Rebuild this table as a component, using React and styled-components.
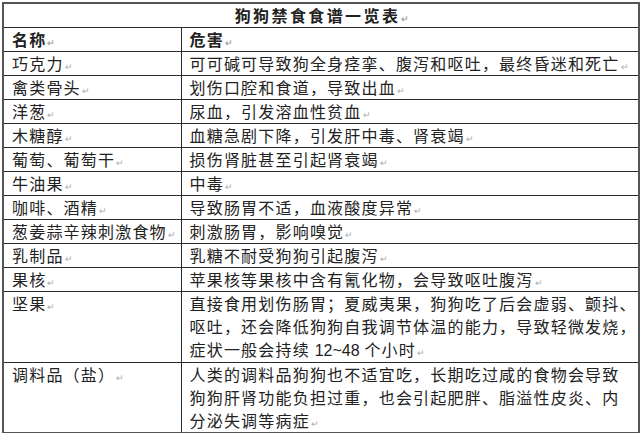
import React from "react";
import styled, { createGlobalStyle } from "styled-components";

const Global = createGlobalStyle`
  html, body { margin: 0; padding: 0; background: #fff; }
  body { font-family: "Noto Sans CJK SC", "Liberation Sans", sans-serif; }
`;

const Page = styled.div`
  padding: 2px 2px 0 2px;
  width: 640px;
  box-sizing: border-box;
`;

const Table = styled.table`
  border-collapse: collapse;
  width: 636px;
  table-layout: fixed;
  border: 2px solid #555;
  color: #222;
  font-size: 16px;
  letter-spacing: 1.2px;
`;

const Col = styled.col`
  width: ${(p) => p.$w};
`;

const Row = styled.tr``;

const Cell = styled.td`
  border: 1px solid #2a2a2a;
  padding: 0 0 0 8px;
  height: 23px;
  line-height: 23px;
  vertical-align: top;
  white-space: nowrap;
  overflow: hidden;
  font-weight: ${(p) => (p.$bold ? 700 : 400)};
`;

const TitleCell = styled(Cell)`
  text-align: center;
  font-weight: 700;
  letter-spacing: 2.4px;
  padding-left: 2px;
`;

const Mark = styled.span`
  font-size: 9px;
  line-height: 0;
  color: #aaa;
  letter-spacing: 0;
  margin-left: 1px;
`;

const Num = styled.span`
  font-family: "Liberation Sans", sans-serif;
  letter-spacing: 0;
`;

const rows = [
  ["巧克力", ["可可碱可导致狗全身痉挛、腹泻和呕吐，最终昏迷和死亡"]],
  ["禽类骨头", ["划伤口腔和食道，导致出血"]],
  ["洋葱", ["尿血，引发溶血性贫血"]],
  ["木糖醇", ["血糖急剧下降，引发肝中毒、肾衰竭"]],
  ["葡萄、葡萄干", ["损伤肾脏甚至引起肾衰竭"]],
  ["牛油果", ["中毒"]],
  ["咖啡、酒精", ["导致肠胃不适，血液酸度异常"]],
  ["葱姜蒜辛辣刺激食物", ["刺激肠胃，影响嗅觉"]],
  ["乳制品", ["乳糖不耐受狗狗引起腹泻"]],
  ["果核", ["苹果核等果核中含有氰化物，会导致呕吐腹泻"]],
  [
    "坚果",
    [
      "直接食用划伤肠胃；夏威夷果，狗狗吃了后会虚弱、颤抖、",
      "呕吐，还会降低狗狗自我调节体温的能力，导致轻微发烧，",
      <>症状一般会持续 <Num>12~48</Num> 个小时</>,
    ],
  ],
  [
    "调料品（盐）",
    [
      "人类的调料品狗狗也不适宜吃，长期吃过咸的食物会导致",
      "狗狗肝肾功能负担过重，也会引起肥胖、脂溢性皮炎、内",
      "分泌失调等病症",
    ],
  ],
];

export default function App() {
  return (
    <>
      <Global />
      <Page>
        <Table>
          <colgroup>
            <Col $w="178px" />
            <Col $w="458px" />
          </colgroup>
          <tbody>
            <Row>
              <TitleCell colSpan={2}>
                狗狗禁食食谱一览表<Mark>↵</Mark>
              </TitleCell>
            </Row>
            <Row>
              <Cell $bold>名称<Mark>↵</Mark></Cell>
              <Cell $bold>危害<Mark>↵</Mark></Cell>
            </Row>
            {rows.map(([name, lines], i) => (
              <Row key={i}>
                <Cell>{name}<Mark>↵</Mark></Cell>
                <Cell>
                  {lines.map((l, j) => (
                    <React.Fragment key={j}>
                      {l}
                      {j === lines.length - 1 ? <Mark>↵</Mark> : <br />}
                    </React.Fragment>
                  ))}
                </Cell>
              </Row>
            ))}
          </tbody>
        </Table>
      </Page>
    </>
  );
}
